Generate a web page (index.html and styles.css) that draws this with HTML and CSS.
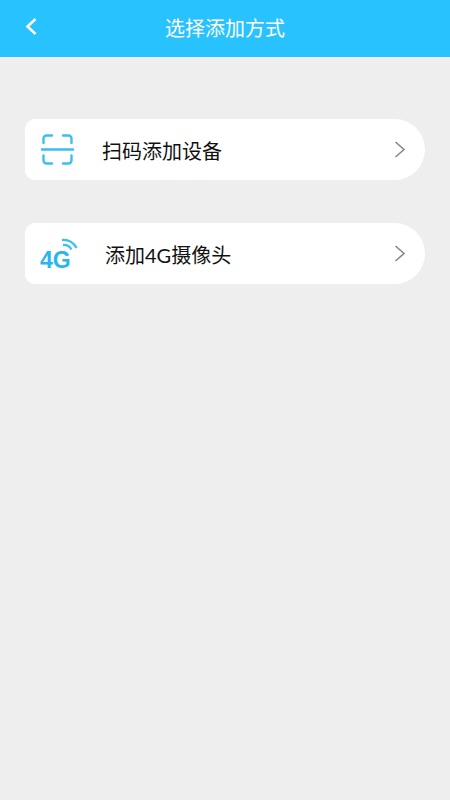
FILE: index.html
```html
<!DOCTYPE html>
<html lang="zh-CN">
<head>
<meta charset="utf-8">
<meta name="viewport" content="width=device-width, initial-scale=1">
<title>选择添加方式</title>
<link rel="stylesheet" href="styles.css">
</head>
<body>
<header class="topbar">
  <button class="back" type="button" aria-label="返回">
    <svg width="12" height="18" viewBox="0 0 12 18" fill="none" stroke="currentColor" stroke-width="2.6"><path d="M10.5 1 2.500 8.500l8 7.500"/></svg>
  </button>
  <h1 class="title">选择添加方式</h1>
</header>
<main class="options">
  <a class="option" href="#scan">
    <svg class="icon" width="40" height="40" viewBox="0 0 40 40" fill="none" stroke="currentColor" stroke-width="2.4" stroke-linecap="round">
      <path d="M6.5 13V8.500a3 3 0 0 1 3-3H15M26 5.500h5.500a3 3 0 0 1 3 3V13M6.500 25.500v5a3 3 0 0 0 3 3H15M26 33.500h5.500a3 3 0 0 0 3-3v-5M5 19.500h31"/>
    </svg>
    <span class="label">扫码添加设备</span>
    <svg class="chevron" width="12" height="18" viewBox="0 0 12 18" fill="none" stroke="currentColor" stroke-width="1.6"><path d="M1.500 1 10 8.500 1.500 16"/></svg>
  </a>
  <a class="option" href="#camera">
    <svg class="icon icon-4g" width="43" height="40" viewBox="0 0 43 40" fill="none" stroke="currentColor" stroke-width="2.3">
      <text class="icon-text" x="3" y="34">4G</text>
      <path d="M25 6c6-.5 11.500 2.500 14.500 8M26 11c4-.3 6.800 1.500 8.500 4.500"/>
    </svg>
    <span class="label">添加4G摄像头</span>
    <svg class="chevron" width="12" height="18" viewBox="0 0 12 18" fill="none" stroke="currentColor" stroke-width="1.6"><path d="M1.500 1 10 8.500 1.500 16"/></svg>
  </a>
</main>
</body>
</html>
```
FILE: styles.css
```css
* {
  box-sizing: border-box;
}

body {
  margin: 0;
  min-height: 100vh;
  background: #eeeeee;
  color: #111111;
  font-family: Lato, "Noto Sans CJK SC", sans-serif;
}

.topbar {
  display: grid;
  grid-template-columns: 62px 1fr 62px;
  align-items: center;
  height: 57px;
  padding-bottom: 4px;
  background: #28c2ff;
  color: #ffffff;
}

.back {
  display: flex;
  justify-content: center;
  padding: 8px;
  border: 0;
  background: none;
  color: inherit;
}

.title {
  margin: 0;
  padding-top: 2px;
  text-align: center;
  font-size: 20px;
  line-height: 28px;
  font-weight: 400;
}

.options {
  display: flex;
  flex-direction: column;
  gap: 43px;
  padding: 62px 25px;
}

.option {
  display: flex;
  align-items: center;
  height: 61px;
  padding: 0 19px 0 12px;
  border-radius: 10px 31px 31px 10px;
  background: #ffffff;
  color: inherit;
  text-decoration: none;
}

.icon {
  flex: none;
  color: #3bbfec;
}

.icon-text {
  fill: #2bb5f0;
  stroke: none;
  font: bold 23px "Liberation Sans", sans-serif;
}

.label {
  flex: 1;
  margin-left: 25px;
  padding-top: 2px;
  font-size: 20px;
  line-height: 28px;
}

.chevron {
  flex: none;
  color: #888888;
}
```
